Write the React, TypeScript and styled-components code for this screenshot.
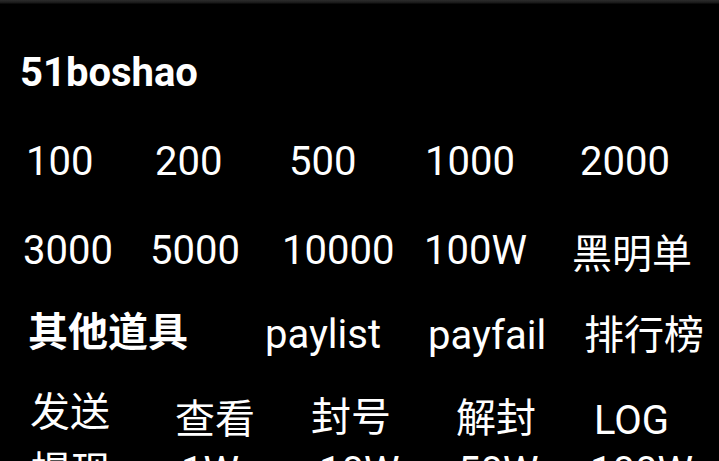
import React from "react";
import styled, { createGlobalStyle } from "styled-components";

const Global = createGlobalStyle`
  html, body { margin: 0; padding: 0; background: #000; }
  body { font-family: "Roboto", "Noto Sans CJK SC", sans-serif; }
`;

const Page = styled.div`
  width: 719px;
  height: 461px;
  overflow: hidden;
  background: #000;
  color: #fff;
  display: flex;
  flex-direction: column;
`;

const TopBar = styled.div`
  height: 4px;
  flex: none;
  background: linear-gradient(#2c2c2c, #1c1c1c 60%, #050505);
`;

const Title = styled.div`
  margin: 49px 0 0 20px;
  font-family: "Roboto", "Noto Sans CJK SC", sans-serif;
  font-weight: 700;
  font-size: 40px;
  line-height: 40px;
  height: 40px;
`;

const Row = styled.div<{ $mt: number; $pl: number }>`
  display: flex;
  align-items: flex-start;
  flex: none;
  height: 40px;
  margin-top: ${(p) => p.$mt}px;
  padding-left: ${(p) => p.$pl}px;
`;

const Item = styled.div<{ $w?: number; $dy?: number; $bold?: boolean }>`
  flex: none;
  width: ${(p) => (p.$w ? `${p.$w}px` : "auto")};
  margin-top: ${(p) => p.$dy ?? 0}px;
  font-family: "Roboto", "Noto Sans CJK SC", sans-serif;
  font-weight: ${(p) => (p.$bold ? 700 : 400)};
  font-size: 40px;
  line-height: 40px;
  height: 40px;
  white-space: nowrap;
`;

type Cell = { t: string; w?: number; dy?: number; bold?: boolean };

const rows: { mt: number; pl: number; cells: Cell[] }[] = [
  {
    mt: 49,
    pl: 26,
    cells: [
      { t: "100", w: 129 },
      { t: "200", w: 134 },
      { t: "500", w: 136 },
      { t: "1000", w: 155 },
      { t: "2000" },
    ],
  },
  {
    mt: 49,
    pl: 23,
    cells: [
      { t: "3000", w: 127 },
      { t: "5000", w: 132 },
      { t: "10000", w: 142 },
      { t: "100W", w: 148 },
      { t: "黑明单", dy: 4 },
    ],
  },
  {
    mt: 42,
    pl: 28,
    cells: [
      { t: "其他道具", w: 237, bold: true },
      { t: "paylist", w: 163, dy: 2 },
      { t: "payfail", w: 156, dy: 3 },
      { t: "排行榜", dy: 3 },
    ],
  },
  {
    mt: 40,
    pl: 30,
    cells: [
      { t: "发送", w: 145 },
      { t: "查看", w: 136, dy: 7 },
      { t: "封号", w: 145, dy: 5 },
      { t: "解封", w: 138, dy: 6 },
      { t: "LOG", dy: 8 },
    ],
  },
  {
    mt: 19,
    pl: 31,
    cells: [
      { t: "提现", w: 150 },
      { t: "1W", w: 138 },
      { t: "10W", w: 139 },
      { t: "50W", w: 132 },
      { t: "100W" },
    ],
  },
];

export default function App() {
  return (
    <>
      <Global />
      <Page>
        <TopBar />
        <Title>51boshao</Title>
        {rows.map((r, i) => (
          <Row key={i} $mt={r.mt} $pl={r.pl}>
            {r.cells.map((c, j) => (
              <Item key={j} $w={c.w} $dy={c.dy} $bold={c.bold}>
                {c.t}
              </Item>
            ))}
          </Row>
        ))}
      </Page>
    </>
  );
}
